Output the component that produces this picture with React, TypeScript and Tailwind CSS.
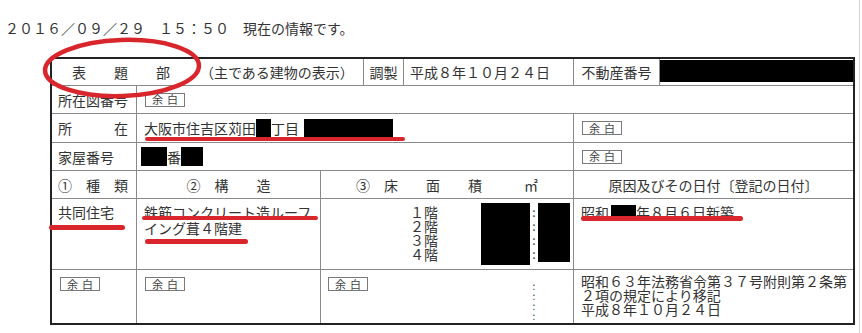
import type { ReactNode } from 'react';

const FONT = { fontFamily: "'Noto Sans CJK JP', 'Noto Sans', sans-serif" };

function Yohaku() {
  return (
    <span className="inline-flex h-[14px] w-[40px] shrink-0 items-center justify-between border border-[#7a7a7a] px-[6px] text-[11px] leading-none text-[#444]">
      <span>余</span>
      <span>白</span>
    </span>
  );
}

function Redact({ className }: { className: string }) {
  return <span className={`inline-block shrink-0 bg-black ${className}`} />;
}

function Mark({ className }: { className: string }) {
  return <div className={`absolute rounded-full bg-[#d9262c] ${className}`} />;
}

function Cell({ className = '', children }: { className?: string; children?: ReactNode }) {
  return <div className={`flex bg-white ${className}`}>{children}</div>;
}

export default function App() {
  return (
    <div className="relative h-[333px] w-[862px] overflow-hidden bg-white text-[14px] text-[#333]" style={FONT}>
      <div className="h-full w-[860px] border-r border-[#d4d4d4]">
        <p className="pl-[5px] pt-[19px] leading-[18px] whitespace-pre">２０１６／０９／２９　１５：５０　現在の情報です。</p>

        <div className="ml-[50px] mt-[20px] grid w-[805px] grid-cols-[84px_183px_42px_39px_169px_85px_193px] grid-rows-[26px_27px_28px_27px_27px_70px_53px] gap-px border-2 border-[#222] bg-[#8a8a8a] leading-[16px]">
          {/* 表題部 header */}
          <Cell className="col-span-3 items-center pl-[20px] whitespace-pre">
            <span>表　　題　　部</span>
            <span className="ml-[30px]">（主である建物の表示）</span>
          </Cell>
          <Cell className="items-center justify-center">調製</Cell>
          <Cell className="items-center pl-[6px]">平成８年１０月２４日</Cell>
          <Cell className="items-center justify-center">不動産番号</Cell>
          <Cell className="items-start">
            <div className="mt-px h-[22px] w-full bg-black" />
          </Cell>

          {/* 所在図番号 */}
          <Cell className="items-center pl-[6px]">所在図番号</Cell>
          <Cell className="col-span-6 items-center pl-[8px]">
            <Yohaku />
          </Cell>

          {/* 所在 */}
          <Cell className="items-center pl-[6px] whitespace-pre">所　　　在</Cell>
          <Cell className="col-span-4 items-center pl-[7px]">
            <span>大阪市住吉区苅田</span>
            <Redact className="h-[19px] w-[15px]" />
            <span>丁目</span>
            <Redact className="ml-[5px] h-[19px] w-[89px]" />
          </Cell>
          <Cell className="col-span-2 items-center pl-[8px]">
            <Yohaku />
          </Cell>

          {/* 家屋番号 */}
          <Cell className="items-center pl-[6px]">家屋番号</Cell>
          <Cell className="col-span-4 items-center pl-[4px]">
            <Redact className="h-[19px] w-[26px]" />
            <span>番</span>
            <Redact className="h-[19px] w-[22px]" />
          </Cell>
          <Cell className="col-span-2 items-center pl-[8px]">
            <Yohaku />
          </Cell>

          {/* column headings */}
          <Cell className="items-center pl-[6px] whitespace-pre">①　種　類</Cell>
          <Cell className="items-center justify-center whitespace-pre">②　構　　造</Cell>
          <Cell className="col-span-3 items-center justify-center whitespace-pre">③　床　　面　　積　　　㎡</Cell>
          <Cell className="col-span-2 items-center justify-center">原因及びその日付〔登記の日付〕</Cell>

          {/* data */}
          <Cell className="items-start pl-[6px] pt-[5px]">共同住宅</Cell>
          <Cell className="items-start pl-[7px] pt-[5px]">
            <p className="whitespace-pre-line">{'鉄筋コンクリート造ルーフ\nイング葺４階建'}</p>
          </Cell>
          <Cell className="col-span-3 items-start pl-[89px]">
            <div className="w-[28px] pt-[6px] leading-[14px] whitespace-pre-line">{'１階\n２階\n３階\n４階'}</div>
            <Redact className="ml-[43px] mt-[4px] h-[62px] w-[49px]" />
            <div className="w-[8px] pt-[6px] text-center text-[12px] leading-[14px] whitespace-pre-line">{':\n:\n:\n:'}</div>
            <Redact className="mt-[4px] h-[59px] w-[32px]" />
          </Cell>
          <Cell className="col-span-2 items-start pl-[7px] pt-[5px]">
            <span>昭和</span>
            <Redact className="ml-[2px] mt-[1px] h-[15px] w-[25px]" />
            <span>年８月６日新築</span>
          </Cell>

          {/* 余白 row */}
          <Cell className="items-start pl-[8px] pt-[7px]">
            <Yohaku />
          </Cell>
          <Cell className="items-start pl-[8px] pt-[7px]">
            <Yohaku />
          </Cell>
          <Cell className="col-span-3 items-start pl-[7px] pt-[7px]">
            <Yohaku />
            <div className="ml-[162px] w-[8px] pt-[4px] text-center text-[10px] leading-[10px] whitespace-pre-line">{':\n:\n:\n:'}</div>
          </Cell>
          <Cell className="col-span-2 items-start pl-[7px] pt-[4px] leading-[14px]">
            <p className="whitespace-pre-line">{'昭和６３年法務省令第３７号附則第２条第\n２項の規定により移記\n平成８年１０月２４日'}</p>
          </Cell>
        </div>
      </div>

      {/* red pen marks */}
      <svg className="absolute left-[40px] top-[35px]" width="166" height="66" viewBox="0 0 166 66" fill="none">
        <ellipse cx="82" cy="33" rx="77" ry="28" stroke="#d9262c" strokeWidth="4.5" transform="rotate(-2 82 33)" />
      </svg>
      <Mark className="left-[145px] top-[137px] h-[4px] w-[260px]" />
      <Mark className="left-[49px] top-[225px] h-[5px] w-[76px]" />
      <Mark className="left-[142px] top-[216px] h-[4px] w-[176px]" />
      <Mark className="left-[145px] top-[239px] h-[5px] w-[103px]" />
      <Mark className="left-[581px] top-[216px] h-[5px] w-[162px]" />
    </div>
  );
}
